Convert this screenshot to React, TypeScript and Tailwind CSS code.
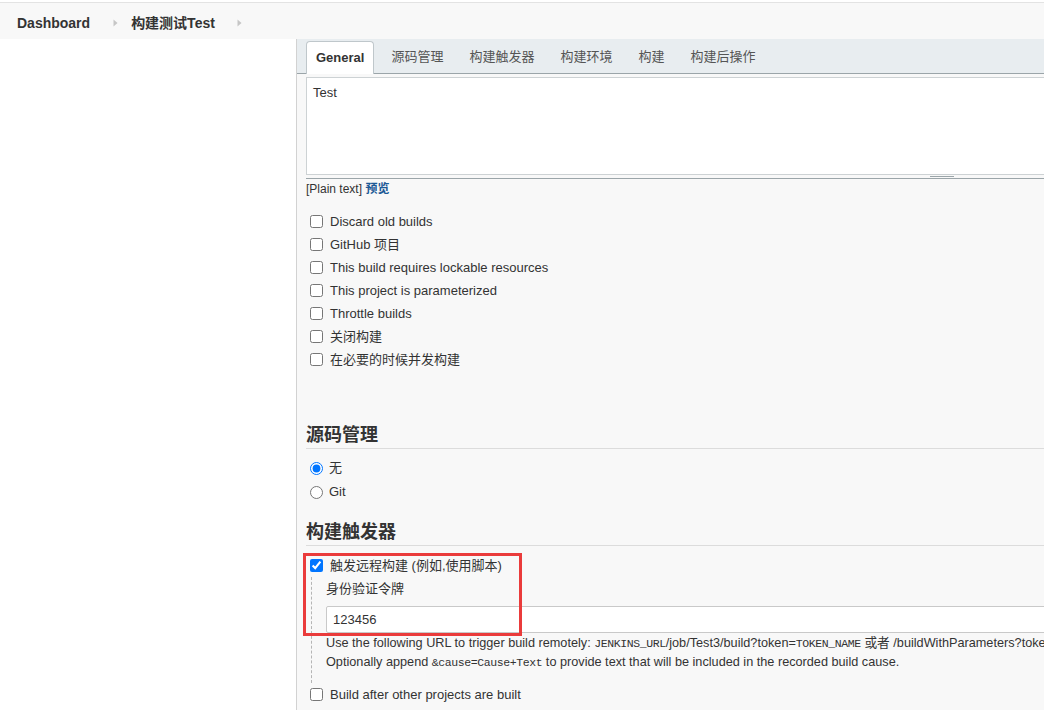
import React from "react";

const tabs = ["General", "源码管理", "构建触发器", "构建环境", "构建", "构建后操作"];

const generalOptions = [
  "Discard old builds",
  "GitHub 项目",
  "This build requires lockable resources",
  "This project is parameterized",
  "Throttle builds",
  "关闭构建",
  "在必要的时候并发构建",
];

const Chevron = ({ className }: { className?: string }) => (
  <svg width="5" height="8" viewBox="0 0 5 8" className={className}>
    <path d="M0.5 0.5 L4.5 4 L0.5 7.5 Z" fill="#c6c6c6" />
  </svg>
);

const CheckRow = ({ label, checked = false }: { label: React.ReactNode; checked?: boolean }) => (
  <label className="flex items-center h-[23px]">
    <input type="checkbox" defaultChecked={checked} className="m-0 ml-[4px] w-[13px] h-[13px]" />
    <span className="ml-[7px]">{label}</span>
  </label>
);

const RadioRow = ({ label, checked = false }: { label: string; checked?: boolean }) => (
  <label className="flex items-center h-[24px]">
    <input type="radio" name="scm" defaultChecked={checked} className="m-0 ml-[4px] w-[13px] h-[13px]" />
    <span className="ml-[6px]">{label}</span>
  </label>
);

const SectionTitle = ({ children }: { children: React.ReactNode }) => (
  <h3 className="text-[18px] leading-[24px] font-bold text-[#333] pb-[1px] border-b border-[#dcdcdc]">
    {children}
  </h3>
);

const Code = ({ children }: { children: React.ReactNode }) => (
  <code className="font-['Liberation_Mono',monospace] text-[11.5px] tracking-[-0.4px]">{children}</code>
);

export default function App() {
  return (
    <div className="w-[1044px] h-[710px] overflow-hidden bg-white text-[13px] text-[#333] font-['Liberation_Sans','Noto_Sans_CJK_SC',sans-serif]">
      {/* breadcrumb */}
      <div className="pt-[2px]">
        <div className="h-[37px] border-t border-[#e3e3e3] bg-[#f8f8f8] flex items-center pt-[4px] pl-[17px] text-[14px] font-bold text-[#333]">
          <span>Dashboard</span>
          <Chevron className="ml-[23px] mr-[13px]" />
          <span>构建测试Test</span>
          <Chevron className="ml-[22px]" />
        </div>
      </div>

      <div className="flex">
        <div className="w-[296px] shrink-0 bg-white" />
        <main className="w-[900px] shrink-0 h-[671px] border-l border-[#d2d2d2] bg-[#f8f8f8]">
          {/* tab bar */}
          <div className="h-[35px] bg-[#e8edf0] border-b border-[#9ba5a9] flex items-end pl-[9px] gap-2">
            {tabs.map((t, i) =>
              i === 0 ? (
                <div
                  key={t}
                  className="h-[33px] -mb-px px-[9px] flex items-center bg-white border border-b-0 border-[#bfc7cb] rounded-t-[4px] font-bold text-[#333]"
                >
                  {t}
                </div>
              ) : (
                <div key={t} className="h-[33px] px-[9px] flex items-center text-[#555]">
                  {t}
                </div>
              )
            )}
          </div>

          <div className="pl-[9px]">
            {/* description */}
            <div className="mt-[3px] h-[98px] bg-white border border-[#cdd2d4] px-[6px] pt-[6px] leading-[18px]">
              Test
            </div>
            <div className="h-[4px] border-b border-[#9ba5a9] flex items-center">
              <div className="ml-[624px] w-[24px] h-[1px] bg-[#9ba5a9]" />
            </div>
            <div className="mt-[3px] text-[12px] leading-[14px]">
              [Plain text] <span className="text-[#1d5a96] font-bold">预览</span>
            </div>

            {/* general options */}
            <div className="mt-[14px]">
              {generalOptions.map((o) => (
                <CheckRow key={o} label={o} />
              ))}
            </div>

            {/* scm */}
            <div className="mt-[52px]">
              <SectionTitle>源码管理</SectionTitle>
              <div className="mt-[7px]">
                <RadioRow label="无" checked />
                <RadioRow label="Git" />
              </div>
            </div>

            {/* triggers */}
            <div className="mt-[16px]">
              <SectionTitle>构建触发器</SectionTitle>
              <div className="relative mt-[8px]">
                <div className="absolute left-[-3px] top-[-1px] w-[219px] h-[83px] border-[3px] border-[#ea3b3b] pointer-events-none z-10" />
                <CheckRow label="触发远程构建 (例如,使用脚本)" checked />
                <div className="ml-[5px] border-l border-dashed border-[#b5b5b5] pl-[14px] pt-[2px] pb-[11px]">
                  <div className="leading-[20px]">身份验证令牌</div>
                  <div className="mt-[7px] h-[27px] bg-white border border-[#c9c9c9] rounded-[2px] flex items-center pl-[6px]">
                    123456
                  </div>
                  <div className="text-[12.7px] leading-[19px] whitespace-nowrap mt-[1px]">
                    <div>
                      Use the following URL to trigger build remotely: <Code>JENKINS_URL</Code>/job/Test3/build?token=
                      <Code>TOKEN_NAME</Code> 或者 /buildWithParameters?token=<Code>TOKEN_NAME</Code>
                    </div>
                    <div>
                      Optionally append <Code>&amp;cause=Cause+Text</Code> to provide text that will be included in the
                      recorded build cause.
                    </div>
                  </div>
                </div>
                <CheckRow label="Build after other projects are built" />
              </div>
            </div>
          </div>
        </main>
      </div>
    </div>
  );
}
